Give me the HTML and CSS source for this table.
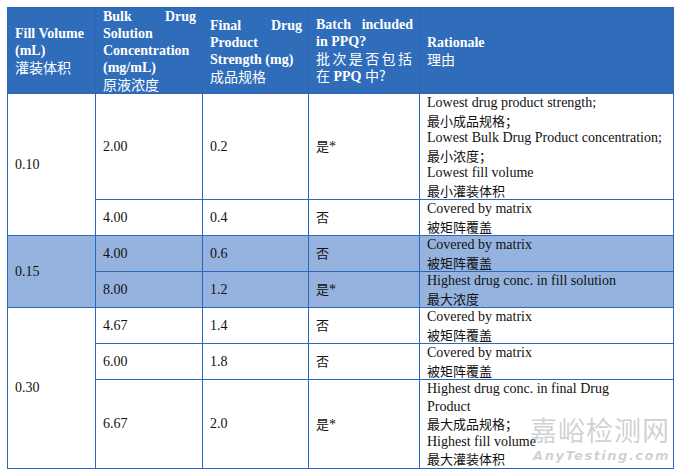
FILE: index.html
```html
<!DOCTYPE html>
<html lang="zh">
<head>
<meta charset="utf-8">
<link rel="stylesheet" href="styles.css">
</head>
<body>
<div class="page">
<table class="matrix">
  <colgroup>
    <col class="c1"><col class="c2"><col class="c3"><col class="c4"><col class="c5">
  </colgroup>
  <thead>
    <tr>
      <th>
        <div>Fill Volume</div>
        <div>(mL)</div>
        <div class="cn">灌装体积</div>
      </th>
      <th>
        <div class="jl">Bulk Drug</div>
        <div>Solution</div>
        <div>Concentration</div>
        <div>(mg/mL)</div>
        <div class="cn">原液浓度</div>
      </th>
      <th>
        <div class="jl">Final Drug</div>
        <div>Product</div>
        <div>Strength (mg)</div>
        <div class="cn">成品规格</div>
      </th>
      <th>
        <div class="jl">Batch included</div>
        <div>in PPQ?</div>
        <div class="cn jl">批次是否包括</div>
        <div><span class="cni">在</span> PPQ <span class="cni">中?</span></div>
      </th>
      <th>
        <div>Rationale</div>
        <div class="cn">理由</div>
      </th>
    </tr>
  </thead>
  <tbody>
    <tr class="r1">
      <td rowspan="2">0.10</td>
      <td>2.00</td><td>0.2</td><td><span class="cni">是</span>*</td>
      <td>
        <div>Lowest drug product strength;</div>
        <div class="cn">最小成品规格；</div>
        <div>Lowest Bulk Drug Product concentration;</div>
        <div class="cn">最小浓度；</div>
        <div>Lowest fill volume</div>
        <div class="cn">最小灌装体积</div>
      </td>
    </tr>
    <tr class="r2">
      <td>4.00</td><td>0.4</td><td><span class="cni">否</span></td>
      <td><div>Covered by matrix</div><div class="cn">被矩阵覆盖</div></td>
    </tr>
    <tr class="r2 hl">
      <td rowspan="2">0.15</td>
      <td>4.00</td><td>0.6</td><td><span class="cni">否</span></td>
      <td><div>Covered by matrix</div><div class="cn">被矩阵覆盖</div></td>
    </tr>
    <tr class="r2 hl">
      <td>8.00</td><td>1.2</td><td><span class="cni">是</span>*</td>
      <td><div>Highest drug conc. in fill solution</div><div class="cn">最大浓度</div></td>
    </tr>
    <tr class="r2">
      <td rowspan="3">0.30</td>
      <td>4.67</td><td>1.4</td><td><span class="cni">否</span></td>
      <td><div>Covered by matrix</div><div class="cn">被矩阵覆盖</div></td>
    </tr>
    <tr class="r2">
      <td>6.00</td><td>1.8</td><td><span class="cni">否</span></td>
      <td><div>Covered by matrix</div><div class="cn">被矩阵覆盖</div></td>
    </tr>
    <tr class="r7">
      <td>6.67</td><td>2.0</td><td><span class="cni">是</span>*</td>
      <td>
        <div>Highest drug conc. in final Drug</div>
        <div>Product</div>
        <div class="cn">最大成品规格；</div>
        <div>Highest fill volume</div>
        <div class="cn">最大灌装体积</div>
      </td>
    </tr>
  </tbody>
</table>
<div class="watermark">
  <div class="wm-cn">嘉峪检测网</div>
  <div class="wm-en">AnyTesting.com</div>
</div>
</div>
</body>
</html>
```

FILE: styles.css
```css
html, body {
  margin: 0;
  padding: 0;
  background: #ffffff;
}
.page {
  position: relative;
  padding: 7px 0 0 7px;
  width: 680px;
  height: 475px;
  box-sizing: border-box;
  overflow: hidden;
  font-family: "Liberation Serif", "Noto Sans CJK SC", serif;
  color: #111111;
}
.matrix {
  border-collapse: collapse;
  table-layout: fixed;
  width: 666px;
  font-size: 14px;
}
.c1 { width: 88px; }
.c2 { width: 107px; }
.c3 { width: 106px; }
.c4 { width: 111px; }
.c5 { width: 254px; }
.cn, .cni {
  font-family: "Noto Sans CJK SC", sans-serif;
  font-weight: normal;
}
.matrix td .cn { font-size: 13px; }
.matrix td .cni { font-size: 13px; }
.jl {
  text-align: justify;
  text-align-last: justify;
}
.matrix th {
  background: #2f6cba;
  color: #ffffff;
  font-weight: bold;
  text-align: left;
  vertical-align: middle;
  line-height: 17px;
  padding: 0 6px 0 7px;
  height: 85px;
  box-sizing: border-box;
  border: 1.5px solid #2d66b3;
}
.matrix th .cn, .matrix th .cni {
  font-size: 14px;
  line-height: 17px;
}
.matrix th .cn.jl { letter-spacing: 1px; }
.matrix td {
  border: 1.5px solid #2a67be;
  padding: 0 6px 0 7px;
  vertical-align: middle;
  line-height: 17.5px;
  box-sizing: border-box;
}
.matrix td .cn { line-height: 17.5px; }
.r1 td { height: 106px; }
.r2 td { height: 36px; }
.r7 td { height: 88px; }
.hl td { background: #95b3de; }
.watermark {
  position: absolute;
  left: 528px;
  top: 412px;
  width: 142px;
  text-align: right;
  color: rgba(150, 150, 150, 0.45);
  pointer-events: none;
}
.wm-cn {
  font-family: "Noto Sans CJK SC", sans-serif;
  font-size: 27px;
  line-height: 36px;
  letter-spacing: 1px;
}
.wm-en {
  font-family: "DejaVu Sans", sans-serif;
  font-style: italic;
  font-weight: bold;
  font-size: 13px;
  line-height: 16px;
  letter-spacing: 1.5px;
}
```
